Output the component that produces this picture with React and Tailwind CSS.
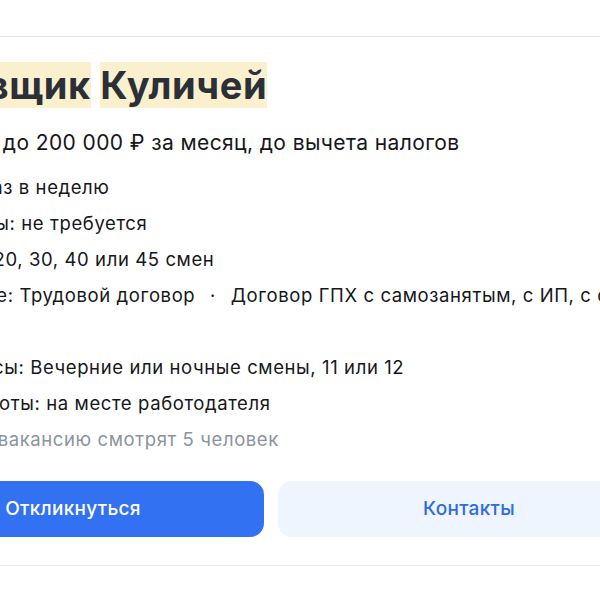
import React from 'react';

const font = { fontFamily: 'Inter, "Noto Sans", sans-serif' };

const rows = [
  { label: 'Выплаты: ', text: 'раз в неделю' },
  { label: 'Опыт работы: ', text: 'не требуется' },
  { label: 'Смены: 10, ', text: '20, 30, 40 или 45 смен' },
];

const Highlight = ({ children }) => (
  <span className="bg-[#fbf0cd]">{children}</span>
);

const App = () => {
  return (
    <div className="h-[600px] w-[600px] overflow-hidden bg-white pt-[36px]" style={font}>
      <div className="border-t border-b border-t-[#e0e2ea] border-b-[#e6e8eb]">
        <div className="ml-[-100px] w-[860px] pt-[26px] pb-[28px] text-[#15171a]">
          {/* Title with search highlight */}
          <h1 className="ml-[-31px] text-[38px] leading-[44px] font-bold tracking-[0.6px] text-[#2b3038] whitespace-nowrap">
            <Highlight>Упаковщик</Highlight> <Highlight>Куличей</Highlight>
          </h1>

          <p className="mt-[22px] ml-[-16px] text-[21px] leading-[28px] tracking-[0.4px] whitespace-nowrap">
            от 150 000 до 200 000 ₽ за месяц, до вычета налогов
          </p>

          <div className="mt-[18px] ml-[-16px] flex flex-col gap-[12px] text-[18.5px] leading-[24px] tracking-[0.6px] whitespace-nowrap">
            {rows.map((r) => (
              <div key={r.label}>
                {r.label}
                {r.text}
              </div>
            ))}
            <div>
              Оформление: Трудовой договор <span className="mx-[9px]">·</span> Договор ГПХ с самозанятым, с ИП, с организацией
            </div>
            <div>физлицом</div>
            <div>Рабочие часы: Вечерние или ночные смены, 11 или 12</div>
            <div>Формат работы: на месте работодателя</div>
            <div className="text-[#8b939e]">Сейчас эту вакансию смотрят 5 человек</div>
          </div>

          {/* Actions */}
          <div className="mt-[30px] ml-[-18px] grid w-[778px] grid-cols-2 gap-[14px]">
            <button className="h-[56px] rounded-[14px] bg-[#3271f2] text-[19px] font-medium tracking-[0.3px] text-white">
              Откликнуться
            </button>
            <button className="h-[56px] rounded-[14px] bg-[#eef5ff] text-[19px] font-medium tracking-[0.3px] text-[#2f6ae6]">
              Контакты
            </button>
          </div>
        </div>
      </div>
    </div>
  );
};

export default App;
